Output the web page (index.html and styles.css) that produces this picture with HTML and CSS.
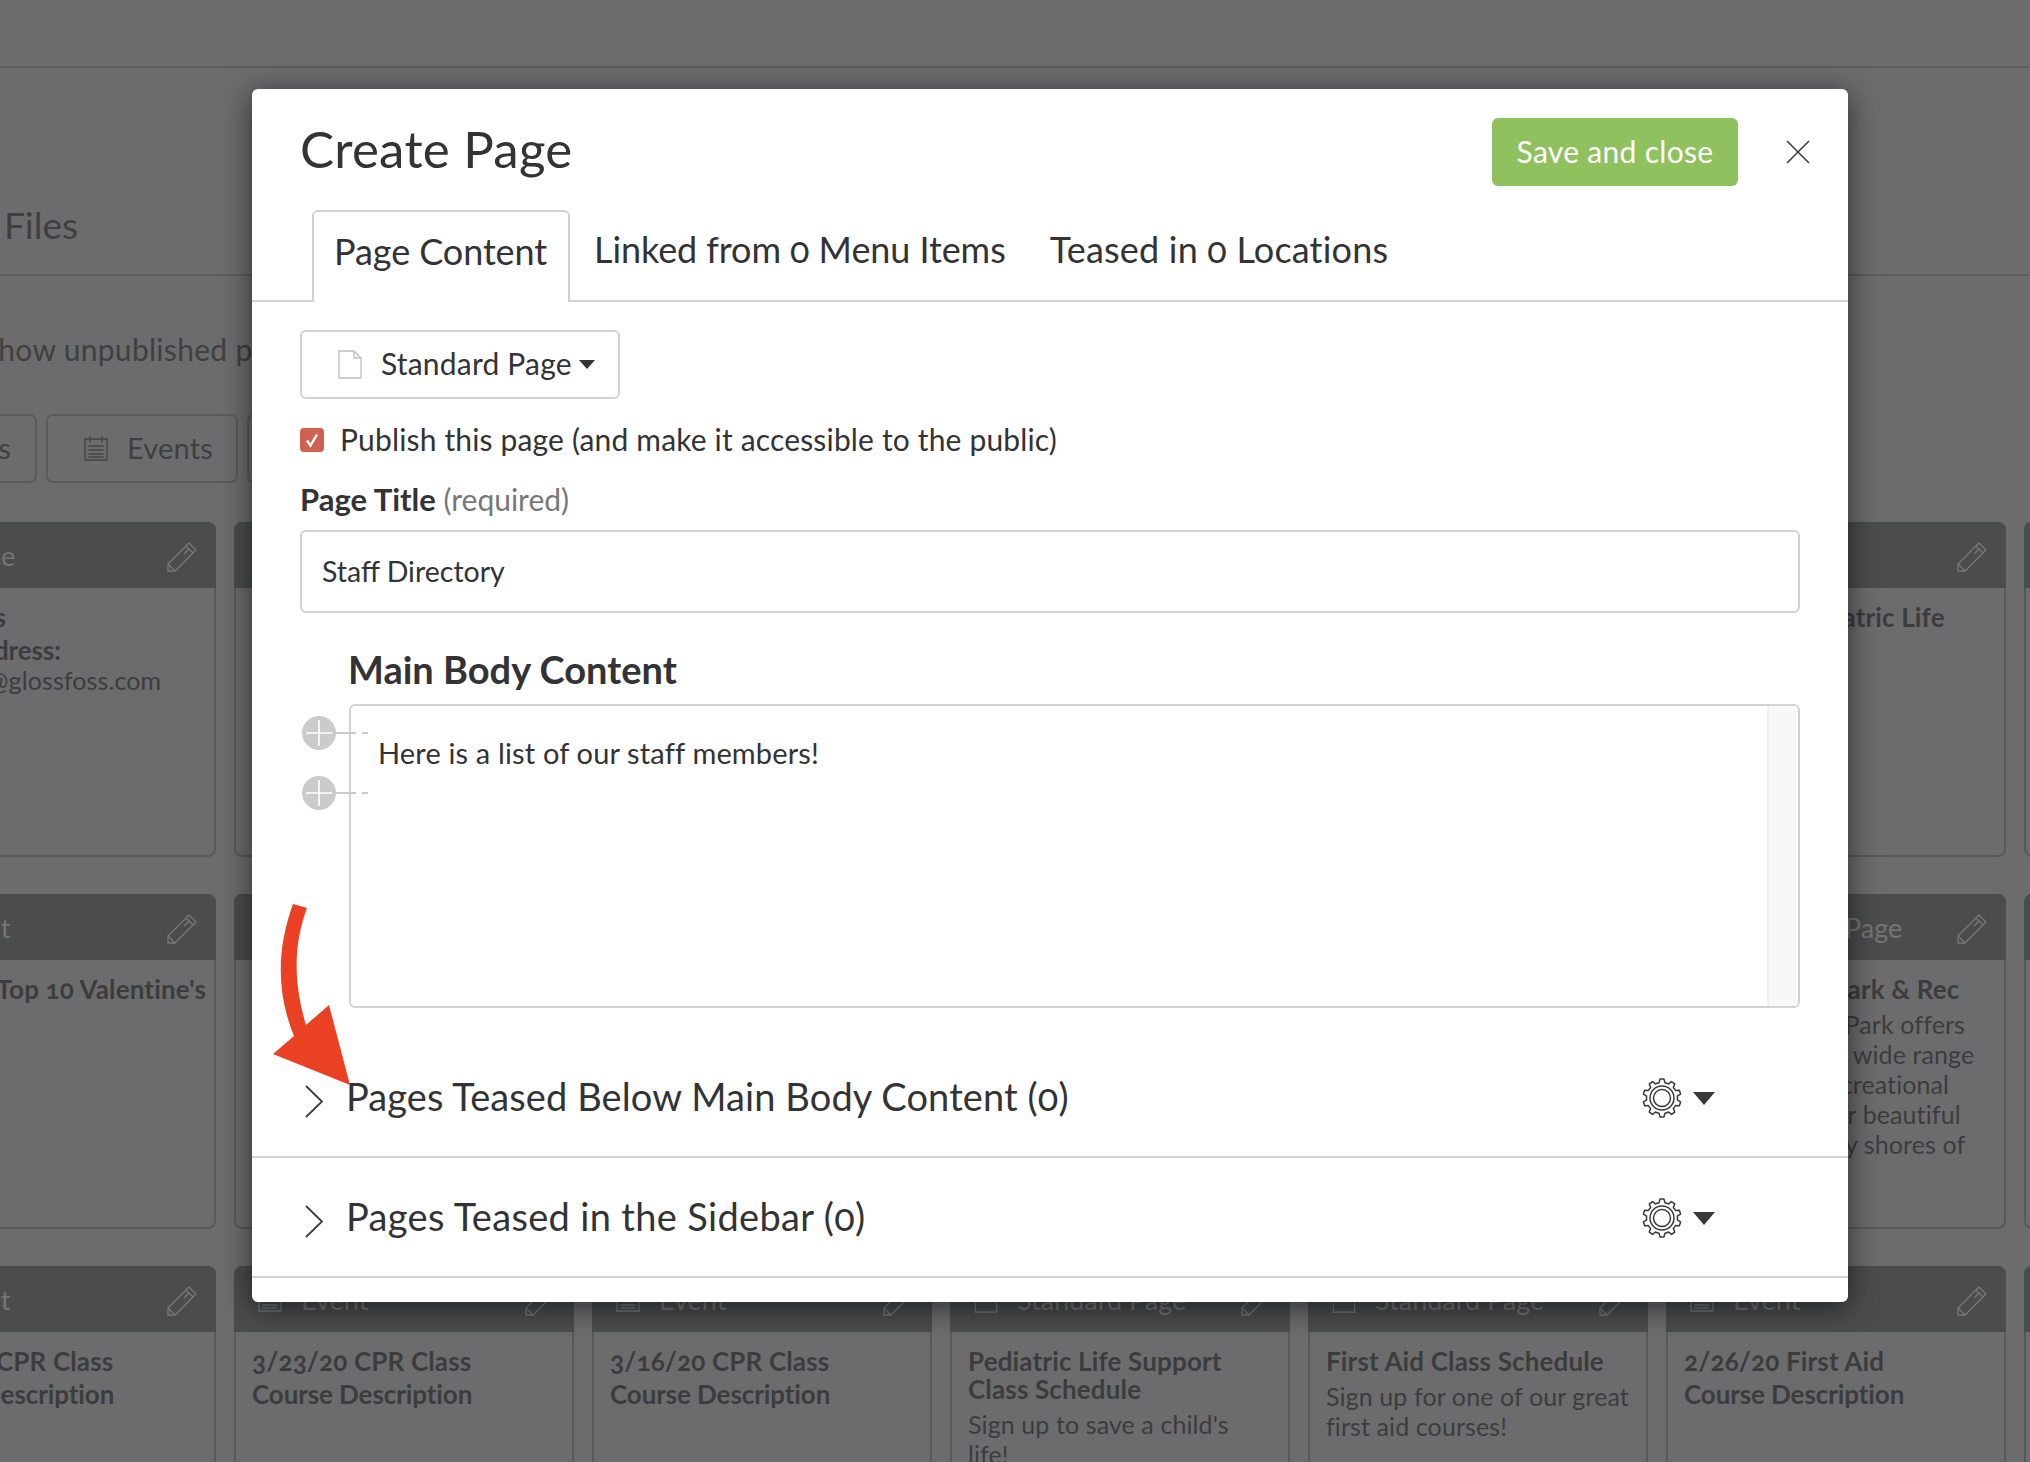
FILE: index.html
```html
<!DOCTYPE html>
<html lang="en">
<head>
<meta charset="utf-8">
<title>Create Page</title>
<link rel="stylesheet" href="styles.css">
</head>
<body>
<svg class="defs" width="0" height="0" aria-hidden="true">
  <symbol id="gear" viewBox="0 0 40 40">
    <path d="M17.04 4.79L18.01 1.1H21.99L22.96 4.79A15.5 15.5 0 0 1 26.55 5.95L29.5 3.55L32.71 5.88L31.34 9.43A15.5 15.5 0 0 1 33.56 12.49L37.36 12.27L38.58 16.05L35.38 18.11A15.5 15.5 0 0 1 35.38 21.89L38.58 23.95L37.36 27.73L33.56 27.51A15.5 15.5 0 0 1 31.34 30.57L32.71 34.12L29.5 36.45L26.55 34.05A15.5 15.5 0 0 1 22.96 35.21L21.99 38.9H18.01L17.04 35.21A15.5 15.5 0 0 1 13.45 34.05L10.5 36.45L7.29 34.12L8.66 30.57A15.5 15.5 0 0 1 6.44 27.51L2.64 27.73L1.42 23.95L4.62 21.89A15.5 15.5 0 0 1 4.62 18.11L1.42 16.05L2.64 12.27L6.44 12.49A15.5 15.5 0 0 1 8.66 9.43L7.29 5.88L10.5 3.55L13.45 5.95A15.5 15.5 0 0 1 17.04 4.79Z" fill="none" stroke="#3a3a3c" stroke-width="1.5" stroke-linejoin="round"/>
    <circle cx="20" cy="20" r="12" fill="none" stroke="#3a3a3c" stroke-width="1.5"/>
    <circle cx="20" cy="20" r="8.5" fill="none" stroke="#3a3a3c" stroke-width="1.5"/>
  </symbol>
  <symbol id="pencil" viewBox="0 0 30 30">
    <path d="M1 29V22L22 1L29 8L8 29ZM19 4L26 11M22 7L17 12M1 22L8 29" fill="none" stroke="currentColor" stroke-width="1.4" stroke-linejoin="round"/>
  </symbol>
  <symbol id="cal" viewBox="0 0 24 26">
    <path d="M1 4H23V25H1ZM6 1V7M18 1V7M4.500 11H19.500M4.500 15H19.500M4.500 19H19.500M4.500 22H19.500" fill="none" stroke="currentColor" stroke-width="1.400"/>
  </symbol>
  <symbol id="doc" viewBox="0 0 24 29">
    <path d="M1 1H16L23 8V28H1ZM16 1V8H23" fill="none" stroke="currentColor" stroke-width="1.300"/>
  </symbol>
  <symbol id="plus" viewBox="0 0 34 34">
    <circle cx="17" cy="17" r="17" fill="#cbcbcb"/>
    <path d="M17 4V30M4 17H30" stroke="#fff" stroke-width="1.600"/>
  </symbol>
</svg>

<div class="page">
  <div class="topbar"></div>
  <div class="files-bar"><span class="files-title">Files</span></div>
  <div class="unpublished">Show unpublished pages</div>
  <div class="filters">
    <div class="filter filter-pages"><span class="filter-text">Pages</span></div>
    <div class="filter filter-events">
      <svg class="filter-icon"><use href="#cal"/></svg>
      <span class="filter-text">Events</span>
    </div>
    <div class="filter filter-more"></div>
  </div>

  <div class="cards">
    <article class="card"><header class="card-head"><svg class="head-icon"><use href="#doc"/></svg><span class="head-label">Office</span><svg class="edit"><use href="#pencil"/></svg></header><div class="card-body"><h3 class="card-title">Locations</h3><p class="card-strong">Email Address:</p><p class="card-text">contacts@glossfoss.com</p></div></article>
    <article class="card"><header class="card-head"></header></article>
    <article class="card"><header class="card-head"></header></article>
    <article class="card"><header class="card-head"></header></article>
    <article class="card"><header class="card-head"></header></article>
    <article class="card"><header class="card-head"><svg class="edit"><use href="#pencil"/></svg></header><div class="card-body"><h3 class="card-title">Updated Pediatric Life</h3></div></article>
    <article class="card"><header class="card-head"></header></article>

    <article class="card"><header class="card-head"><svg class="head-icon"><use href="#cal"/></svg><span class="head-label">Event</span><svg class="edit"><use href="#pencil"/></svg></header><div class="card-body"><h3 class="card-title">Sandra's&nbsp;Top&nbsp;10&nbsp;Valentine's</h3></div></article>
    <article class="card"><header class="card-head"></header></article>
    <article class="card"><header class="card-head"></header></article>
    <article class="card"><header class="card-head"></header></article>
    <article class="card"><header class="card-head"></header></article>
    <article class="card"><header class="card-head"><svg class="head-icon"><use href="#doc"/></svg><span class="head-label">Standard Page</span><svg class="edit"><use href="#pencil"/></svg></header><div class="card-body"><h3 class="card-title">Welcome to Park &amp; Rec</h3><p class="card-text">Our Glossfoss Park offers<br>our residents a wide range<br>classes plus recreational<br>spaces near our beautiful<br>along the sandy shores of</p></div></article>
    <article class="card"><header class="card-head"></header></article>

    <article class="card"><header class="card-head"><svg class="head-icon"><use href="#cal"/></svg><span class="head-label">Event</span><svg class="edit"><use href="#pencil"/></svg></header><div class="card-body"><h3 class="card-title">3/30/20 CPR Class</h3><p class="card-strong">Course Description</p></div></article>
    <article class="card"><header class="card-head"><svg class="head-icon"><use href="#cal"/></svg><span class="head-label">Event</span><svg class="edit"><use href="#pencil"/></svg></header><div class="card-body"><h3 class="card-title">3/23/20 CPR Class</h3><p class="card-strong">Course Description</p></div></article>
    <article class="card"><header class="card-head"><svg class="head-icon"><use href="#cal"/></svg><span class="head-label">Event</span><svg class="edit"><use href="#pencil"/></svg></header><div class="card-body"><h3 class="card-title">3/16/20 CPR Class</h3><p class="card-strong">Course Description</p></div></article>
    <article class="card"><header class="card-head"><svg class="head-icon"><use href="#doc"/></svg><span class="head-label">Standard Page</span><svg class="edit"><use href="#pencil"/></svg></header><div class="card-body"><h3 class="card-title">Pediatric Life Support Class Schedule</h3><p class="card-text">Sign up to save a child's<br>life!</p></div></article>
    <article class="card"><header class="card-head"><svg class="head-icon"><use href="#doc"/></svg><span class="head-label">Standard Page</span><svg class="edit"><use href="#pencil"/></svg></header><div class="card-body"><h3 class="card-title">First Aid Class Schedule</h3><p class="card-text">Sign up for one of our great first aid courses!</p></div></article>
    <article class="card"><header class="card-head"><svg class="head-icon"><use href="#cal"/></svg><span class="head-label">Event</span><svg class="edit"><use href="#pencil"/></svg></header><div class="card-body"><h3 class="card-title">2/26/20 First Aid</h3><p class="card-strong">Course Description</p></div></article>
    <article class="card"><header class="card-head"></header></article>
  </div>
</div>

<section class="modal">
  <div class="modal-top">
    <h1 class="modal-title">Create Page</h1>
    <button class="save" type="button">Save and close</button>
    <svg class="close" viewBox="0 0 24 24"><path d="M1 1L23 23M23 1L1 23" fill="none" stroke="#3a3a3c" stroke-width="1.500"/></svg>
  </div>
  <nav class="tabs">
    <span class="tab tab-active">Page Content</span>
    <span class="tab">Linked from 0 Menu Items</span>
    <span class="tab tab-teased">Teased in 0 Locations</span>
  </nav>
  <div class="form">
    <div class="select">
      <svg class="select-icon"><use href="#doc"/></svg>
      <span class="select-text">Standard Page</span>
      <span class="select-caret"></span>
    </div>
    <label class="publish">
      <span class="check"><svg viewBox="0 0 24 24" width="24" height="24"><path d="M7 12.500L10.500 17.500L17 6.500" fill="none" stroke="#fff" stroke-width="2.400"/></svg></span>
      <span class="publish-text">Publish this page (and make it accessible to the public)</span>
    </label>
    <div class="field-label"><b class="field-name">Page Title</b> <span class="required">(required)</span></div>
    <div class="input">Staff Directory</div>
    <h2 class="body-title">Main Body Content</h2>
    <div class="editor">
      <div class="editor-text">Here is a list of our staff members!</div>
      <div class="editor-scroll"></div>
      <div class="adder adder-one"><svg class="adder-plus"><use href="#plus"/></svg><span class="adder-line"></span></div>
      <div class="adder adder-two"><svg class="adder-plus"><use href="#plus"/></svg><span class="adder-line"></span></div>
    </div>
  </div>
  <div class="tease-row">
    <svg class="chevron" viewBox="0 0 18 33"><path d="M1 1L17 16.500L1 32" fill="none" stroke="#3a3a3c" stroke-width="1.800"/></svg>
    <span class="tease-text">Pages Teased Below Main Body Content (0)</span>
    <svg class="gear"><use href="#gear"/></svg>
    <span class="gear-caret"></span>
  </div>
  <div class="tease-row">
    <svg class="chevron" viewBox="0 0 18 33"><path d="M1 1L17 16.500L1 32" fill="none" stroke="#3a3a3c" stroke-width="1.800"/></svg>
    <span class="tease-text tease-sidebar">Pages Teased in the Sidebar (0)</span>
    <svg class="gear"><use href="#gear"/></svg>
    <span class="gear-caret"></span>
  </div>
</section>

<svg class="arrow" viewBox="0 0 90 190" width="90" height="190">
  <path d="M23 4L37 8C26 38 21 75 36 125L59 105L80 185L3 154L24 136C5 90 8 45 23 4Z" fill="#ea4125"/>
</svg>
</body>
</html>
```

FILE: styles.css
```css
* { box-sizing: border-box; }
html, body { margin: 0; padding: 0; }
body {
  width: 2030px;
  height: 1462px;
  overflow: hidden;
  position: relative;
  background: #6c6c6e;
  font-family: Lato, "Open Sans", sans-serif;
  font-variant-numeric: oldstyle-nums;
  color: #333335;
}
.defs { position: absolute; }

.page { color: #3c3c3e; }
.topbar { height: 68px; border-bottom: 2px solid #5e5e60; }
.files-bar {
  height: 208px;
  border-bottom: 2px solid #5e5e60;
  padding: 137px 0 0 4px;
  font-size: 37px;
  line-height: 40px;
  color: #3f3f41;
}
.unpublished {
  margin: 55px 0 0 -18px;
  font-size: 30px;
  line-height: 36px;
  letter-spacing: .3px;
  color: #3f3f41;
  white-space: nowrap;
}
.filters {
  display: flex;
  gap: 9px;
  margin: 47px 0 0 -124px;
  height: 69px;
}
.filter {
  display: flex;
  align-items: center;
  padding-bottom: 2px;
  border: 2px solid #5b5b5d;
  border-radius: 7px;
  font-size: 29px;
  color: #3f3f41;
  letter-spacing: .2px;
}
.filter-pages { width: 161px; justify-content: flex-end; padding-right: 24px; }
.filter-events { width: 192px; padding-left: 36px; gap: 19px; }
.filter-more { width: 200px; }
.filter-icon { width: 24px; height: 26px; color: #444446; }

.cards {
  display: grid;
  grid-template-columns: repeat(7, 340px);
  grid-auto-rows: 335px;
  gap: 37px 18px;
  margin: 39px 0 0 -124px;
}
.card {
  border: 2px solid #59595b;
  border-radius: 8px;
}
.card-head {
  display: flex;
  align-items: center;
  height: 66px;
  margin: -2px -2px 0;
  padding: 0 19px 0 24px;
  border-radius: 8px 8px 0 0;
  background: #4b4c4e;
  color: #757577;
}
.head-icon { width: 24px; height: 28px; flex: none; margin-right: 19px; }
.head-label { font-size: 27px; white-space: nowrap; }
.edit { width: 30px; height: 30px; margin: 4px 0 0 auto; flex: none; color: #77777a; }
.card-body { padding: 15px 16px; color: #3c3c3e; }
.card-title, .card-strong {
  margin: 0;
  font-size: 26px;
  font-weight: 700;
  line-height: 28px;
}
.card-title { letter-spacing: .15px; }
.card-strong { margin-top: 5px; letter-spacing: -.1px; }
.card-text {
  margin: 6px 0 0;
  font-size: 25px;
  line-height: 30px;
  letter-spacing: .1px;
}
.card-strong + .card-text { margin-top: 1px; }

.modal {
  position: absolute;
  left: 252px;
  top: 89px;
  width: 1596px;
  height: 1213px;
  overflow: hidden;
  background: #fff;
  border-radius: 6px;
  box-shadow: 0 5px 30px rgba(0, 0, 0, .6);
}
.modal-top {
  display: flex;
  align-items: center;
  height: 97px;
  padding: 29px 38px 0 48px;
}
.modal-title {
  margin: -6px auto 0 0;
  font-size: 51px;
  font-weight: 400;
  line-height: 60px;
  letter-spacing: .25px;
}
.save {
  width: 246px;
  height: 68px;
  padding: 0 0 3px;
  border: 0;
  border-radius: 6px;
  background: #8fc15e;
  color: #fff;
  font: 400 30px Lato, sans-serif;
  letter-spacing: .3px;
  margin-right: 48px;
}
.close { width: 24px; height: 24px; }

.tabs {
  display: flex;
  align-items: flex-start;
  height: 116px;
  padding: 24px 0 0 60px;
  border-bottom: 2px solid #d2d2d2;
}
.tab {
  font-size: 36px;
  line-height: 44px;
  font-weight: 400;
  letter-spacing: -.08px;
  padding: 17px 0 0;
  margin-left: 45px;
  white-space: nowrap;
}
.tab-teased { margin-left: 44px; letter-spacing: .2px; }
.tab-active {
  width: 258px;
  height: 92px;
  margin: 0 -21px 0 0;
  padding: 17px 0 0 20px;
  border: 2px solid #d2d2d2;
  border-bottom: 0;
  border-radius: 6px 6px 0 0;
  background: #fff;
}

.form { padding: 28px 48px 0; }
.select {
  display: flex;
  align-items: center;
  width: 320px;
  height: 69px;
  border: 2px solid #d2d2d2;
  border-radius: 6px;
  padding-left: 36px;
}
.select-icon { width: 24px; height: 29px; color: #bdbdbd; margin-right: 19px; }
.select-text { font-size: 30px; margin-top: -3px; letter-spacing: .2px; }
.select-caret {
  margin-left: 7px;
  border: 8px solid transparent;
  border-top: 9px solid #333335;
  border-bottom: 0;
}
.publish {
  display: flex;
  align-items: center;
  gap: 16px;
  margin-top: 29px;
  height: 24px;
}
.check { width: 24px; height: 24px; border-radius: 4px; background: #cd6251; }
.publish-text { font-size: 30px; margin-top: -2px; white-space: nowrap; letter-spacing: .16px; }
.field-label {
  margin-top: 30px;
  height: 34px;
  font-size: 30px;
  line-height: 34px;
}
.field-name { font-weight: 700; font-size: 31px; }
.required { color: #777; }
.input {
  display: flex;
  align-items: center;
  height: 83px;
  margin-top: 14px;
  padding: 0 0 2px 20px;
  border: 2px solid #d2d2d2;
  border-radius: 6px;
  font-size: 28.5px;
}
.body-title {
  margin: 34px 0 0 48px;
  font-size: 38px;
  line-height: 44px;
  font-weight: 700;
}
.editor {
  position: relative;
  display: flex;
  height: 304px;
  margin: 13px 0 0 49px;
  border: 2px solid #d2d2d2;
  border-radius: 6px;
}
.editor-text {
  flex: 1;
  padding: 27px 0 0 27px;
  font-size: 29px;
  line-height: 40px;
  letter-spacing: .15px;
}
.editor-scroll {
  width: 30px;
  margin-right: 1px;
  background: #f8f8f8;
  border-left: 2px solid #efefef;
}
.adder {
  position: absolute;
  left: -49px;
  display: flex;
  align-items: center;
}
.adder-one { top: 10px; }
.adder-two { top: 70px; }
.adder-plus { width: 34px; height: 34px; }
.adder-line {
  width: 32px;
  height: 2px;
  background: linear-gradient(90deg, #cbcbcb 0 20px, transparent 20px 26px, #cbcbcb 26px);
}

.tease-row {
  display: flex;
  align-items: center;
  height: 120px;
  padding: 0 133px 0 53px;
  border-bottom: 2px solid #d2d2d2;
}
.form + .tease-row { margin-top: 30px; }
.chevron { width: 18px; height: 33px; margin: 8px 23px 0 0; }
.tease-text { font-size: 38px; margin-top: -2px; white-space: nowrap; letter-spacing: .1px; }
.tease-sidebar { letter-spacing: .33px; }
.gear { width: 40px; height: 40px; margin: 2px 0 0 auto; }
.gear-caret {
  margin: 2px 0 0 11px;
  border: 11px solid transparent;
  border-top: 13px solid #3a3a3c;
  border-bottom: 0;
}
.arrow {
  position: absolute;
  left: 270px;
  top: 900px;
}
```
